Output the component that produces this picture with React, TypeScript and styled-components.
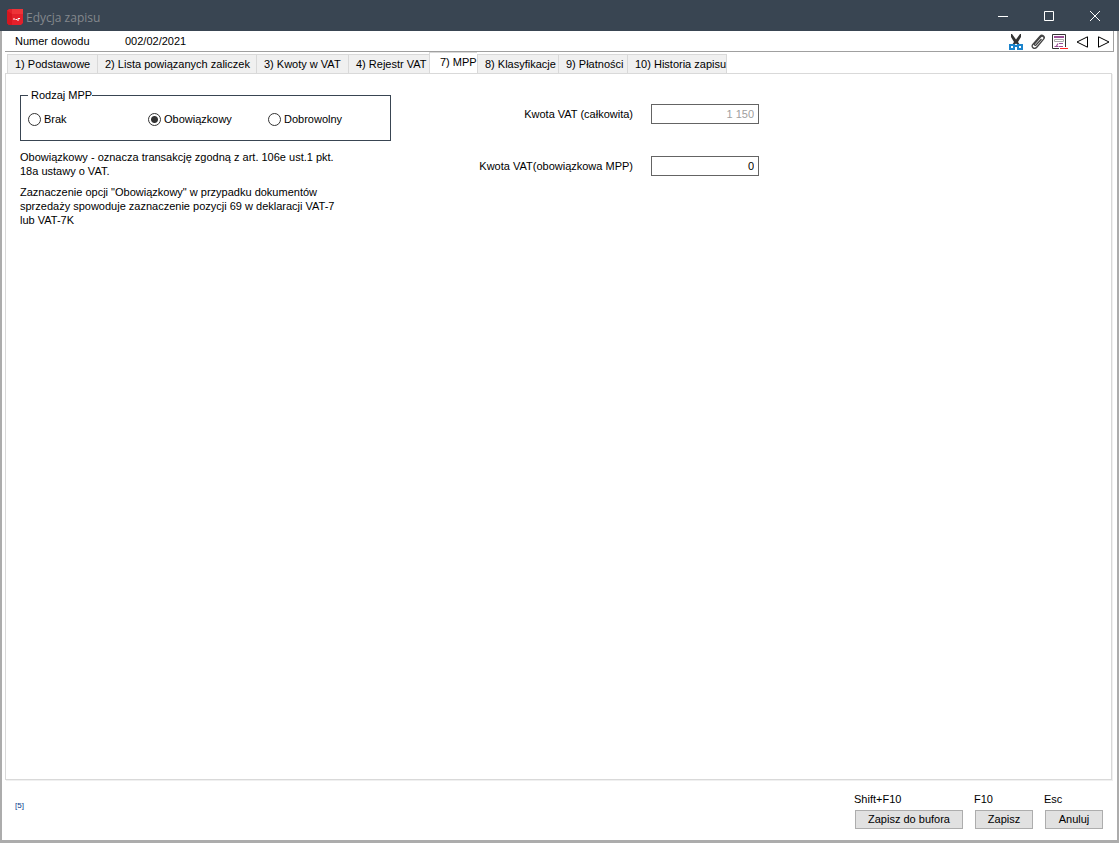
import React, { useState } from "react";
import styled, { createGlobalStyle } from "styled-components";

const GlobalStyle = createGlobalStyle`
  * { box-sizing: border-box; }
  body { margin: 0; background: #fff; }
  body, button, input { font-family: "Liberation Sans", Arial, sans-serif; font-size: 11px; line-height: 14px; color: #000; }
`;

const Window = styled.div`
  display: flex;
  flex-direction: column;
  min-height: 100vh;
  background: #fff;
  border: 2px solid #acacac;
  border-width: 0 2px 3px;
`;

const TitleBar = styled.header`
  display: flex;
  align-items: center;
  height: 31px;
  margin: 0 -2px;
  padding: 0 1px 0 7px;
  background: #394552;
`;

const Title = styled.h1`
  flex: 1;
  margin: 4px 0 0 3px;
  font: 400 12px/16px "Open Sans", "Segoe UI", sans-serif;
  color: #84888d;
`;

const Logo = styled.svg`
  width: 16px;
  height: 16px;
  margin-top: 3px;
`;

const WindowButton = styled.button`
  display: flex;
  align-items: center;
  justify-content: center;
  width: 46px;
  height: 31px;
  padding: 0;
  border: 0;
  background: none;
  color: #fff;
`;

const RecordBar = styled.div`
  display: flex;
  align-items: center;
  height: 21px;
  margin: 0 3px;
  padding-left: 10px;
  border: solid #a0a0a0;
  border-width: 0 1px 1px 0;
`;

const RecordLabel = styled.span`
  width: 110px;
`;

const RecordNumber = styled.span`
  flex: 1;
`;

const Tools = styled.div`
  display: flex;
  margin-right: -2px;
  padding-top: 2px;
`;

const ToolButton = styled.button`
  display: flex;
  align-items: center;
  justify-content: center;
  width: 22px;
  height: 18px;
  padding: 0;
  border: 0;
  background: none;
`;

const TabList = styled.div`
  display: flex;
  align-items: flex-end;
  height: 22px;
  margin-bottom: -1px;
  padding-left: 5px;
`;

const Tab = styled.button<{ $active: boolean; $width: number }>`
  flex: none;
  width: ${(p) => p.$width}px;
  height: ${(p) => (p.$active ? 22 : 20)}px;
  padding: ${(p) => (p.$active ? "0 0 2px 10px" : "0 0 0 7px")};
  border: solid #d9d9d9;
  border-width: 1px 0 1px 1px;
  border-bottom-color: ${(p) => (p.$active ? "#fff" : "#d9d9d9")};
  background: ${(p) => (p.$active ? "#fff" : "#f0f0f0")};
  text-align: left;
  white-space: nowrap;

  &:last-child {
    border-right-width: 1px;
  }
`;

const Panel = styled.main`
  display: flex;
  flex: 1;
  align-items: flex-start;
  margin: 0 5px 0 3px;
  padding: 14px;
  border: 1px solid #d9d9d9;
  box-shadow: 1px 1px 0 #f0f0f0;
`;

const TypeColumn = styled.section`
  width: 371px;
`;

const Group = styled.fieldset`
  display: flex;
  min-width: 0;
  height: 53px;
  margin: 0;
  padding: 10px 7px 0;
  border: 1px solid #394552;
`;

const Legend = styled.legend`
  padding: 0 0 0 3px;
`;

const RadioLabel = styled.label`
  display: flex;
  align-items: center;
  gap: 3px;
  width: 120px;
  height: 14px;

  &:last-child {
    width: auto;
  }
`;

const Radio = styled.input`
  appearance: none;
  width: 13px;
  height: 13px;
  margin: 0;
  border: 1px solid #333;
  border-radius: 50%;
  background: #fff;

  &:checked { background: radial-gradient(circle, #333 0 3px, #fff 4px); }
`;

const Note = styled.p`
  width: 330px;
  margin: 9px 0 0;

  & + & { margin-top: 7px; }
`;

const Amounts = styled.section`
  display: flex;
  flex-direction: column;
  gap: 32px;
  margin: 16px 0 0 72px;
`;

const AmountRow = styled.div`
  display: flex;
  align-items: center;
`;

const AmountLabel = styled.label`
  width: 188px;
  padding-right: 18px;
  text-align: right;
`;

const AmountInput = styled.input`
  width: 108px;
  height: 20px;
  padding: 0 4px;
  border: 1px solid #646464;
  border-radius: 0;
  background: #fff;
  text-align: right;

  &:disabled { color: #a0a0a0; }
`;

const Footer = styled.footer`
  display: flex;
  align-items: flex-start;
  height: 60px;
  padding: 12px 14px 0 13px;
`;

const Counter = styled.span`
  flex: 1;
  padding-top: 7px;
  font-size: 8px;
  color: #0a3c8c;
`;

const Action = styled.div`
  display: flex;
  flex-direction: column;
  gap: 4px;
  margin-left: 12px;
`;

const Shortcut = styled.span`
  margin-left: -1px;
`;

const ActionButton = styled.button<{ $wide?: boolean }>`
  width: ${(p) => (p.$wide ? 108 : 58)}px;
  height: 19px;
  padding: 0 0 2px;
  border: 1px solid #adadad;
  background: #e1e1e1;
`;

const tabs = [
  { name: "1) Podstawowe", width: 90 },
  { name: "2) Lista powiązanych zaliczek", width: 159 },
  { name: "3) Kwoty w VAT", width: 92 },
  { name: "4) Rejestr VAT", width: 81 },
  { name: "7) MPP", width: 48 },
  { name: "8) Klasyfikacje", width: 81 },
  { name: "9) Płatności", width: 69 },
  { name: "10) Historia zapisu", width: 100 },
];

const CutIcon = () => (
  <svg width="14" height="16" viewBox="0 0 14 16" fill="none">
    <path d="M2 0h1l4 5.500L11 0h1v3L9 8l2 3H9L7 9.500 5 11H3l2-3-3-5z" fill="#333" />
    <path d="M1 11h4v4H1zM9 11h4v4H9zM5 12h4" stroke="#1c84cc" strokeWidth="2" />
  </svg>
);

const ClipIcon = () => (
  <svg width="14" height="16" viewBox="0 0 14 16" fill="none" stroke="#444" strokeWidth="1.3">
    <path d="M10.500 5L5 11c-1 1-2.300-.2-1.400-1.300L9.500 3c2-2 4.700.2 2.900 2.400L6 13c-2.500 3-6.500.3-4.200-2.700L9 2.200c2-2.200 5.500.3 3.800 2.800" />
  </svg>
);

const ReportIcon = () => (
  <svg width="16" height="16" viewBox="0 0 16 16" fill="none">
    <path d="M7 14.500H.5V.5h13V13" stroke="#333" />
    <path d="M2 3h10" stroke="#9b4f96" strokeWidth="2" />
    <path d="M2.500 5.500h9v2h-9z" stroke="#aaa" />
    <path d="M2.500 12.500h4M4.500 12l1.500-2.500M7 9.500h4M7 12.500h4" stroke="#9b4f96" strokeWidth="1.200" />
    <path d="M8 14.500h8" stroke="#f22" />
  </svg>
);

const PreviousIcon = () => (
  <svg width="12" height="12" viewBox="0 0 12 12" fill="none" stroke="#000">
    <path d="M11.500 .8v10.400L1 6z" />
  </svg>
);

const NextIcon = () => (
  <svg width="12" height="12" viewBox="0 0 12 12" fill="none" stroke="#000">
    <path d="M.5 .8v10.400L11 6z" />
  </svg>
);

const tools = [
  { name: "Wytnij", Icon: CutIcon },
  { name: "Załącz", Icon: ClipIcon },
  { name: "Raport", Icon: ReportIcon },
  { name: "Poprzedni", Icon: PreviousIcon },
  { name: "Następny", Icon: NextIcon },
];

const windowButtons = [
  { name: "Minimalizuj", path: "M0 5.500h10" },
  { name: "Maksymalizuj", path: "M.5 .5h9v9h-9z" },
  { name: "Zamknij", path: "M0 0l10 10M10 0L0 10" },
];

export default function App() {
  const [active, setActive] = useState("7) MPP");
  const [kind, setKind] = useState("Obowiązkowy");
  const [amount, setAmount] = useState("0");

  return (
    <>
      <GlobalStyle />
      <Window>
        <TitleBar>
          <Logo viewBox="0 0 16 16">
            <path d="M0 1.500L2 0h14v14l-2 2H2l-2-2z" fill="#e3202b" />
            <path d="M0 1.500L5 5v11H2l-2-2z" fill="#d5161f" />
            <path d="M5 5V0h11v5z" fill="#ee3338" />
            <path d="M7 9v2M8.500 10.500h1.500M11 12V9.500h2" stroke="#fff" fill="none" />
          </Logo>
          <Title>Edycja zapisu</Title>
          {windowButtons.map((b) => (
            <WindowButton key={b.name} aria-label={b.name}>
              <svg width="10" height="10" viewBox="0 0 10 10" fill="none" stroke="currentColor">
                <path d={b.path} />
              </svg>
            </WindowButton>
          ))}
        </TitleBar>

        <RecordBar>
          <RecordLabel>Numer dowodu</RecordLabel>
          <RecordNumber>002/02/2021</RecordNumber>
          <Tools>
            {tools.map(({ name, Icon }) => (
              <ToolButton key={name} aria-label={name}>
                <Icon />
              </ToolButton>
            ))}
          </Tools>
        </RecordBar>

        <TabList role="tablist">
          {tabs.map((t) => (
            <Tab
              key={t.name}
              role="tab"
              aria-selected={t.name === active}
              $active={t.name === active}
              $width={t.width}
              onClick={() => setActive(t.name)}
            >
              {t.name}
            </Tab>
          ))}
        </TabList>

        <Panel>
          <TypeColumn>
            <Group>
              <Legend>Rodzaj MPP</Legend>
              {["Brak", "Obowiązkowy", "Dobrowolny"].map((k) => (
                <RadioLabel key={k}>
                  <Radio type="radio" name="mpp" checked={kind === k} onChange={() => setKind(k)} />
                  {k}
                </RadioLabel>
              ))}
            </Group>
            <Note>Obowiązkowy - oznacza transakcję zgodną z art. 106e ust.1 pkt. 18a ustawy o VAT.</Note>
            <Note>
              Zaznaczenie opcji "Obowiązkowy" w przypadku dokumentów sprzedaży spowoduje zaznaczenie
              pozycji 69 w deklaracji VAT-7 lub VAT-7K
            </Note>
          </TypeColumn>
          <Amounts>
            <AmountRow>
              <AmountLabel htmlFor="vat-total">Kwota VAT (całkowita)</AmountLabel>
              <AmountInput id="vat-total" value="1 150" disabled />
            </AmountRow>
            <AmountRow>
              <AmountLabel htmlFor="vat-mpp">Kwota VAT(obowiązkowa MPP)</AmountLabel>
              <AmountInput id="vat-mpp" value={amount} onChange={(e) => setAmount(e.target.value)} />
            </AmountRow>
          </Amounts>
        </Panel>

        <Footer>
          <Counter>[5]</Counter>
          <Action>
            <Shortcut>Shift+F10</Shortcut>
            <ActionButton $wide>Zapisz do bufora</ActionButton>
          </Action>
          <Action>
            <Shortcut>F10</Shortcut>
            <ActionButton>Zapisz</ActionButton>
          </Action>
          <Action>
            <Shortcut>Esc</Shortcut>
            <ActionButton>Anuluj</ActionButton>
          </Action>
        </Footer>
      </Window>
    </>
  );
}
